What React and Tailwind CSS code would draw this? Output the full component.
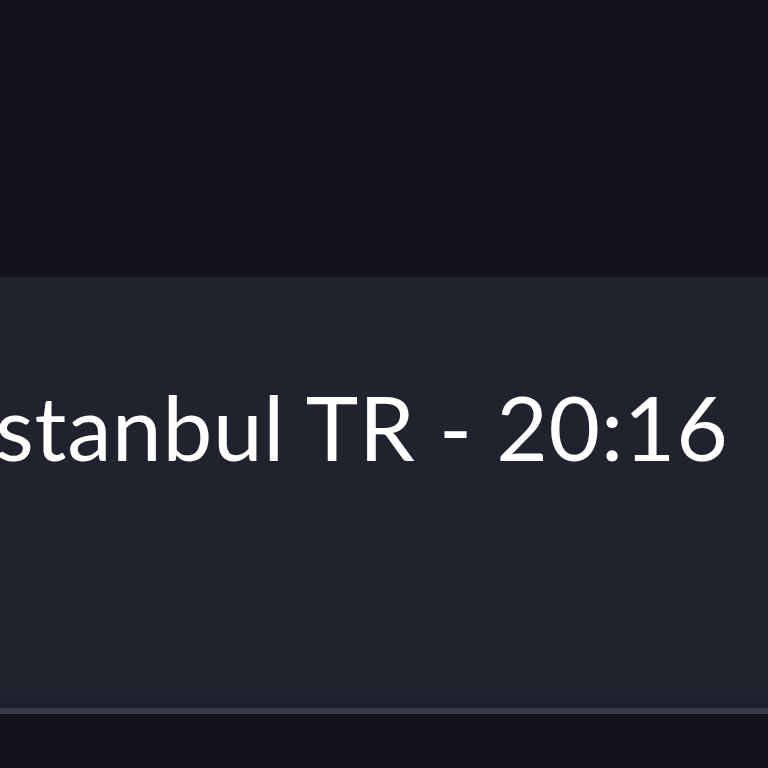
export default function App() {
  return (
    <div className="w-[768px] h-[768px] bg-[#13121d] flex flex-col overflow-hidden">
      <div className="h-[277px] shrink-0 bg-[#13121d]" />
      <div className="h-[437px] shrink-0 bg-linear-to-b from-[#20222e] from-[96%] to-[#1b2133] flex items-start pt-[105px] overflow-hidden border-b-[6px] border-[#383a48]">
        <div
          className="ml-[-29px] whitespace-nowrap text-white text-[89px] leading-none tracking-[0.7px]"
          style={{ fontFamily: "Lato, 'Noto Sans', sans-serif" }}
        >
          Istanbul TR - 20:16
        </div>
      </div>
      <div className="flex-1 bg-[#13121d]" />
    </div>
  );
}
